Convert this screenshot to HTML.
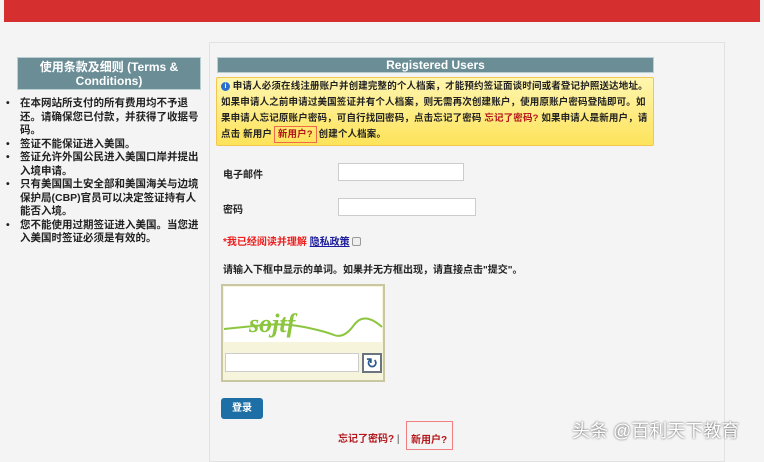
<!DOCTYPE html>
<html><head><meta charset="utf-8"><style>
*{margin:0;padding:0;box-sizing:border-box}
body{width:764px;height:452px;background:#f4f4f4;font-family:"Liberation Sans","Noto Sans CJK SC",sans-serif;font-size:10px;font-weight:bold;color:#222;position:relative;overflow:hidden}
.a{position:absolute}
.red{left:4px;top:0;width:756px;height:22px;background:#d52f2f}
.panel{left:209px;top:42px;width:516px;height:420px;border:1px solid #e2e2e2;background:#f4f4f4}
.hd{background:#6a8d96;color:#fff;text-align:center;font-size:12px;border:1px solid #b9cfd2}
ul{list-style:none}
li{position:relative;padding-left:20px;line-height:13.5px;font-size:10.5px}
li:before{content:"•";position:absolute;left:6px}
.y{left:216px;top:77px;width:438px;height:69px;border:1px solid #f3c64f;border-radius:2px;padding:1px 4px;font-size:9.5px;letter-spacing:0.15px;line-height:16px;background:linear-gradient(#fff6b0,#fde35a)}
.rd{color:#b3151b}
input.t{position:absolute;height:18px;border:1px solid #ccc;background:#fff}
</style></head><body>
<div class="a red"></div>
<div class="a panel"></div>
<div class="a hd" style="left:17px;top:57px;width:184px;height:33px;line-height:14px;padding-top:2px">使用条款及细则 (Terms &amp;<br>Conditions)</div>
<ul class="a" style="left:0;top:97px;width:200px">
<li>在本网站所支付的所有费用均不予退还。请确保您已付款，并获得了收据号码。</li>
<li>签证不能保证进入美国。</li>
<li>签证允许外国公民进入美国口岸并提出入境申请。</li>
<li>只有美国国土安全部和美国海关与边境保护局(CBP)官员可以决定签证持有人能否入境。</li>
<li>您不能使用过期签证进入美国。当您进入美国时签证必须是有效的。</li>
</ul>
<div class="a hd" style="left:217px;top:57px;width:437px;height:16px;line-height:14px">Registered Users</div>
<div class="a y"><span style="display:inline-block;width:9px;height:9px;border-radius:50%;background:#2a6fd0;color:#fff;font-size:7px;line-height:9px;text-align:center;vertical-align:1px">i</span> 申请人必须在线注册账户并创建完整的个人档案，才能预约签证面谈时间或者登记护照送达地址。如果申请人之前申请过美国签证并有个人档案，则无需再次创建账户，使用原账户密码登陆即可。如果申请人忘记原账户密码，可自行找回密码，点击忘记了密码 <span class="rd">忘记了密码?</span> 如果申请人是新用户，请点击 新用户 <span class="rd" style="outline:1px solid #f06a4a;padding:2px 3px">新用户?</span> 创建个人档案。</div>
<div class="a" style="left:223px;top:166px">电子邮件</div>
<input class="t" style="left:338px;top:163px;width:126px">
<div class="a" style="left:223px;top:201px">密码</div>
<input class="t" style="left:338px;top:198px;width:138px">
<div class="a" style="left:223px;top:233px;color:#f01c1c">*我已经阅读并理解 <span style="color:#1a1a9a;text-decoration:underline">隐私政策</span> <span style="display:inline-block;width:9px;height:9px;border:1px solid #999;border-radius:2px;background:#eee;vertical-align:-1px"></span></div>
<div class="a" style="left:223px;top:261px">请输入下框中显示的单词。如果并无方框出现，请直接点击"提交"。</div>
<div class="a" style="left:221px;top:284px;width:164px;height:98px;border:2px solid #c9c6a2;background:#f7f4dc">
<div style="height:55px;background:#fff;margin:1px">
<svg width="160" height="55"><path d="M0 42 Q20 40 40 38 T80 40 T110 48 T130 38 T158 40" stroke="#8cc63f" stroke-width="2" fill="none"/><text x="25" y="45" font-size="26" fill="#8cc63f" font-family="Liberation Serif" font-style="italic">sojtf</text></svg></div>
<input class="t" style="left:2px;top:67px;width:134px;height:19px">
<div class="a" style="left:139px;top:67px;width:20px;height:20px;border:2px solid #6a7580;background:#fff;color:#2d5b8c;font-size:14px;text-align:center;line-height:16px">↻</div>
</div>
<div class="a" style="left:221px;top:398px;width:42px;height:21px;background:#1e6fa6;border-radius:3px;color:#fff;text-align:center;line-height:21px">登录</div>
<div class="a rd" style="left:338px;top:430px">忘记了密码? <span style="color:#888">|</span></div>
<div class="a rd" style="left:406px;top:421px;width:47px;height:29px;border:1px solid #f08080;padding:9px 0 0 4px">新用户?</div>
<div class="a" style="left:572px;top:417px;color:#fff;font-size:18px;font-weight:normal;text-shadow:0 0 2px #444">头条 @百利天下教育</div>
</body></html>
